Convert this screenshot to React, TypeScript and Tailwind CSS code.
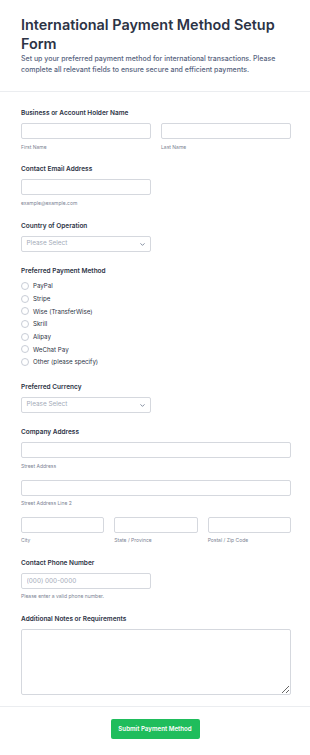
import React from 'react';
import { ChevronDown } from 'lucide-react';

const methods = ['PayPal', 'Stripe', 'Wise (TransferWise)', 'Skrill', 'Alipay', 'WeChat Pay', 'Other (please specify)'];

function Label({ children }: { children: React.ReactNode }) {
  return <div className="text-[6.5px] leading-[10px] font-semibold text-[#2c3345] mb-[5px]">{children}</div>;
}

function Sub({ children }: { children: React.ReactNode }) {
  return <div className="text-[5px] leading-[7px] text-[#7c8494] mt-[4.5px]">{children}</div>;
}

function Input({ className = '', placeholder }: { className?: string; placeholder?: string }) {
  return (
    <input
      placeholder={placeholder}
      className={`block h-4 w-full rounded-[2px] border border-[#d5d8de] bg-white px-[4.5px] text-[6.4px] text-[#2c3345] placeholder:text-[#a3aab8] ${className}`}
    />
  );
}

function Select() {
  return (
    <div className="flex h-4 w-[130px] items-center justify-between rounded-[2px] border border-[#d5d8de] bg-white pl-[4.5px] pr-[4px] text-[6.4px] text-[#a3aab8]">
      <span>Please Select</span>
      <ChevronDown className="h-[7px] w-[7px] text-[#57647e]" strokeWidth={2.5} />
    </div>
  );
}

export default function App() {
  return (
    <div className="min-h-[755px] w-[310px] bg-white font-['Inter',sans-serif]">
      <div className="border-b border-[#ebedf0] pl-[21px] pr-[19px] pt-[15px] pb-[16px]">
        <h1 className="text-[14.4px] leading-[19px] font-semibold text-[#2c3345]">International Payment Method Setup Form</h1>
        <p className="mt-[1px] text-[7px] leading-[10.6px] font-medium text-[#57647e]">
          Set up your preferred payment method for international transactions. Please complete all relevant fields to ensure secure and efficient payments.
        </p>
      </div>

      <div className="pl-[21px] pr-[19px] pt-[16px] pb-[11px]">
        <div>
          <Label>Business or Account Holder Name</Label>
          <div className="grid grid-cols-2 gap-[10px]">
            <div>
              <Input />
              <Sub>First Name</Sub>
            </div>
            <div>
              <Input />
              <Sub>Last Name</Sub>
            </div>
          </div>
        </div>

        <div className="mt-[13.5px]">
          <Label>Contact Email Address</Label>
          <Input className="!w-[130px]" />
          <Sub>example@example.com</Sub>
        </div>

        <div className="mt-[14.5px]">
          <Label>Country of Operation</Label>
          <Select />
        </div>

        <div className="mt-[13.7px]">
          <div className="text-[6.5px] leading-[10px] font-semibold text-[#2c3345] mb-[3.6px]">Preferred Payment Method</div>
          {methods.map((m) => (
            <div key={m} className="flex h-[12.7px] items-center gap-[4px]">
              <span className="h-[8px] w-[8px] rounded-full border border-[#c8cdd6] bg-white" />
              <span className="text-[6.2px] text-[#2c3345]">{m}</span>
            </div>
          ))}
        </div>

        <div className="mt-[14px]">
          <Label>Preferred Currency</Label>
          <Select />
        </div>

        <div className="mt-[14px]">
          <Label>Company Address</Label>
          <Input />
          <Sub>Street Address</Sub>
          <div className="mt-[10px]">
            <Input />
            <Sub>Street Address Line 2</Sub>
          </div>
          <div className="mt-[9.5px] grid grid-cols-3 gap-[10px]">
            <div>
              <Input />
              <Sub>City</Sub>
            </div>
            <div>
              <Input />
              <Sub>State / Province</Sub>
            </div>
            <div>
              <Input />
              <Sub>Postal / Zip Code</Sub>
            </div>
          </div>
        </div>

        <div className="mt-[13.5px]">
          <Label>Contact Phone Number</Label>
          <Input className="!w-[130px]" placeholder="(000) 000-0000" />
          <Sub>Please enter a valid phone number.</Sub>
        </div>

        <div className="mt-[13.8px]">
          <Label>Additional Notes or Requirements</Label>
          <textarea className="block h-[66px] w-full rounded-[2px] border border-[#d5d8de] bg-white" />
        </div>
      </div>

      <div className="flex justify-center border-t border-[#ebedf0] pt-[12px] pb-[16px]">
        <button className="h-5 w-[89px] rounded-[2px] bg-[#1fbd5c] text-[6.2px] font-semibold text-white">Submit Payment Method</button>
      </div>
    </div>
  );
}
